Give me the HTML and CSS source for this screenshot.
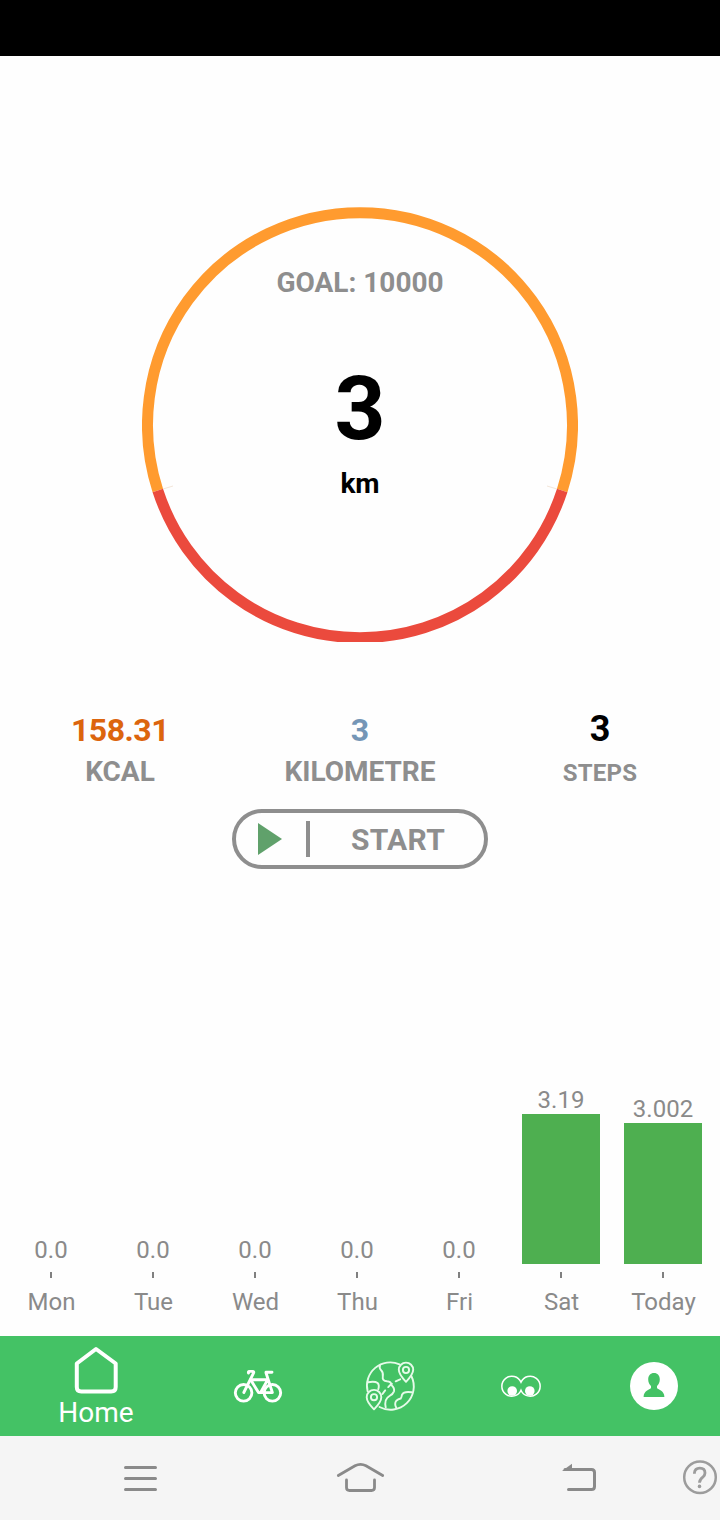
FILE: index.html
```html
<!DOCTYPE html>
<html lang="en">
<head>
<meta charset="utf-8">
<title>Activity</title>
<link rel="stylesheet" href="styles.css">
</head>
<body>
<div class="status-bar"></div>
<main class="home">
  <section class="dial">
    <svg class="dial-ring" viewBox="0 0 436 435" fill="none" stroke-width="11">
      <path stroke="#ff9b2f" d="M15.8 283.5A212.5 212.5 0 1 1 420.2 283.5"/>
      <path stroke="#eb4a3d" d="M15.8 283.5A212.5 212.5 0 0 0 420.2 283.5"/>
      <path stroke="#f3e6da" stroke-width="1" d="M21 282L31 279M415 282L405 279"/>
    </svg>
    <div class="dial-text">
      <p class="goal">GOAL: 10000</p>
      <p class="distance">3</p>
      <p class="unit">km</p>
    </div>
  </section>
  <section class="stats">
    <div class="stat kcal"><b>158.31</b><span>KCAL</span></div>
    <div class="stat kilometre"><b>3</b><span>KILOMETRE</span></div>
    <div class="stat steps"><b>3</b><span>STEPS</span></div>
  </section>
  <button class="start">
    <svg class="play" viewBox="0 0 24 32"><path fill="#60a16b" d="M0 0L24 16L0 32Z"/></svg>
    <i class="divider"></i>
    <span class="start-label">START</span>
  </button>
  <section class="chart">
    <div class="day"><span class="value">0.0</span><i class="bar" style="height:0"></i><i class="tick"></i><span class="name">Mon</span></div>
    <div class="day"><span class="value">0.0</span><i class="bar" style="height:0"></i><i class="tick"></i><span class="name">Tue</span></div>
    <div class="day"><span class="value">0.0</span><i class="bar" style="height:0"></i><i class="tick"></i><span class="name">Wed</span></div>
    <div class="day"><span class="value">0.0</span><i class="bar" style="height:0"></i><i class="tick"></i><span class="name">Thu</span></div>
    <div class="day"><span class="value">0.0</span><i class="bar" style="height:0"></i><i class="tick"></i><span class="name">Fri</span></div>
    <div class="day"><span class="value">3.19</span><i class="bar" style="height:150px"></i><i class="tick"></i><span class="name">Sat</span></div>
    <div class="day"><span class="value">3.002</span><i class="bar" style="height:141px"></i><i class="tick"></i><span class="name">Today</span></div>
  </section>
</main>
<nav class="tabs">
  <a class="tab tab-home">
    <svg width="48" height="50" viewBox="72 1345 48 50" fill="none" stroke="#fff" stroke-width="4" stroke-linejoin="round"><path d="M96 1349L115.7 1363.5V1387Q115.7 1391.5 111.2 1391.5H81.3Q76.8 1391.5 76.8 1387V1363.5Z"/></svg>
    <span>Home</span>
  </a>
  <a class="tab tab-bike">
    <svg width="50" height="36" viewBox="233 1368 50 36" fill="none" stroke="#fff" stroke-width="2.9" stroke-linecap="round" stroke-linejoin="round"><circle cx="243.6" cy="1392.8" r="8.3"/><circle cx="272.4" cy="1392.8" r="8.3"/><path d="M243.8 1392.5L253.5 1373.2Q254.3 1371.4 252.6 1371.4H249.3Q248 1371.4 248.5 1373"/><path d="M250.7 1379.8H267.7L260.5 1392.6H272.4L266 1372.8M266 1372.3H272M250.7 1379.8L258.5 1392.6H262"/></svg>
  </a>
  <a class="tab tab-map">
    <svg width="52" height="52" viewBox="364 1360 52 52" fill="none" stroke="#e6fbe9" stroke-width="1.9" stroke-linecap="round" stroke-linejoin="round"><path d="M399.5 1364.3A23.3 23.3 0 0 0 367.6 1391.2M411.3 1376A23.3 23.3 0 0 1 379.5 1407"/><path d="M406 1381.8Q398.8 1374.3 398.8 1369.8A7.2 7.2 0 0 1 413.2 1369.8Q413.2 1374.3 406 1381.8Z"/><circle cx="406" cy="1370" r="3.1"/><path d="M374 1409.3Q366.7 1402 366.7 1397.2A7.3 7.3 0 0 1 381.3 1397.2Q381.3 1402 374 1409.3Z"/><circle cx="374" cy="1397.2" r="3.1"/><path d="M380 1365.5Q378.8 1368 381.3 1370.5Q383.5 1372.5 382.8 1376.5Q382 1380.8 387 1381.3Q391.3 1381.5 391.3 1385Q394.8 1388 394 1391.3Q393 1394 389.5 1396Q384 1399 385.7 1407.5M368 1382.2Q375 1381 377.6 1383Q379.6 1385 378.3 1389.2M396.4 1408Q394 1403.8 396.3 1400.7Q398 1399.2 400.7 1398.5Q401.6 1397.5 402 1394.7Q404 1391 411.6 1392.3"/><path stroke-dasharray="5 4.5" d="M400.2 1379.3Q390 1383 382.5 1394"/></svg>
  </a>
  <a class="tab tab-eyes">
    <svg width="42" height="24" viewBox="500 1374 42 24" fill="none" stroke="#fff" stroke-width="1.5"><path d="M521 1382.2A10 10 0 1 0 521 1390.2A10 10 0 1 0 521 1382.2Z"/><circle cx="512.2" cy="1391" r="4.8" fill="#fff" stroke="none"/><circle cx="529.8" cy="1391" r="4.8" fill="#fff" stroke="none"/></svg>
  </a>
  <a class="tab tab-profile">
    <svg width="48" height="48" viewBox="0 0 48 48"><circle cx="24" cy="24" r="24" fill="#fff"/><path fill="#44c265" d="M24 11C20.5 11 18.2 13.6 18.2 17.5C18.2 20.5 19.4 22.5 21 24V26C19.5 28 13.6 28.5 13.6 35H34.4C34.4 28.5 28.5 28 27 26V24C28.6 22.5 29.8 20.5 29.8 17.5C29.8 13.6 27.5 11 24 11Z"/></svg>
  </a>
</nav>
<footer class="system-bar">
  <svg class="sys-menu" width="36" height="30" viewBox="122 1463 36 30" stroke="#8a8a8a" stroke-width="3" stroke-linecap="round"><path d="M125.5 1467.5H155.5M125.5 1478.5H155.5M125.5 1489.5H155.5"/></svg>
  <svg class="sys-home" width="50" height="34" viewBox="335 1461 50 34" fill="none" stroke="#8a8a8a" stroke-width="2.8" stroke-linecap="round"><path d="M338.3 1475.5L355 1465.7Q360.5 1463 366 1465.7L382.7 1475.5M346.5 1480V1487.5Q346.5 1490.5 349.5 1490.5H371.5Q374.5 1490.5 374.5 1487.5V1480"/></svg>
  <svg class="sys-back" width="36" height="30" viewBox="561 1463 36 30" fill="none" stroke="#8a8a8a" stroke-width="3" stroke-linecap="round"><path d="M565 1469.5H591.5Q594.5 1469.5 594.5 1472.5V1486.5Q594.5 1489.5 591.5 1489.5H568.5"/><path fill="#8a8a8a" stroke="none" d="M562 1471L572 1463.8V1471Z"/></svg>
  <svg class="sys-help" width="36" height="36" viewBox="682 1460 36 36" fill="none" stroke="#9c9c9c" stroke-width="2.5"><circle cx="700" cy="1477.3" r="15.8"/><path stroke-width="2.8" d="M694.4 1473.7V1473Q694.8 1468.2 699.8 1468.2Q705 1468.2 705 1473Q705 1475.3 702.8 1477.2Q699.5 1479.7 699.5 1482.8"/><circle cx="699.5" cy="1486.4" r="1.8" fill="#9c9c9c" stroke="none"/></svg>
</footer>
</body>
</html>
```
FILE: styles.css
```css
* { box-sizing: border-box; }
body {
  margin: 0;
  width: 720px;
  height: 1520px;
  display: flex;
  flex-direction: column;
  background: #fefefe;
  font-family: Roboto, "Liberation Sans", sans-serif;
  color: #8e8e8e;
}
p { margin: 0; }
svg { display: block; flex: none; }
.status-bar { height: 56px; background: #000; }
.home {
  height: 1280px;
  padding-top: 151px;
  display: flex;
  flex-direction: column;
  align-items: center;
}
.dial { display: grid; width: 436px; height: 435px; }
.dial-ring { grid-area: 1 / 1; width: 436px; height: 435px; }
.dial-text {
  grid-area: 1 / 1;
  padding-top: 60px;
  text-align: center;
  font-weight: 700;
}
.goal { font-size: 28px; line-height: 32px; }
.distance { margin-top: 60px; font-size: 89px; line-height: 100px; color: #000; }
.unit { margin-top: 9px; font-size: 28px; line-height: 32px; color: #000; }
.stats {
  margin-top: 66px;
  width: 720px;
  display: grid;
  grid-template-columns: repeat(3, 1fr);
}
.stat { display: flex; flex-direction: column; align-items: center; font-weight: 700; }
.stat b { font-size: 32px; line-height: 44px; font-weight: 700; }
.stat span { font-size: 28px; line-height: 40px; }
.kcal b { color: #dc650d; letter-spacing: -0.5px; }
.kilometre b { color: #7596b6; }
.stat.steps b { font-size: 36px; line-height: 42px; color: #000; }
.stat.steps span { font-size: 24px; line-height: 46px; letter-spacing: 0.2px; }
.start {
  margin-top: 13px;
  width: 256px;
  height: 60px;
  padding: 0 0 0 22px;
  display: flex;
  align-items: center;
  border: 4px solid #8e8e8e;
  border-radius: 30px;
  background: transparent;
  color: #8e8e8e;
  font: 700 30px/36px Roboto, "Liberation Sans", sans-serif;
}
.play { width: 24px; height: 32px; }
.divider { margin-left: 24px; width: 4px; height: 36px; background: #8e8e8e; }
.start-label { margin-left: 41px; padding-top: 2px; letter-spacing: 0.3px; }
.chart {
  margin-top: auto;
  width: 720px;
  height: 262px;
  display: grid;
  grid-template-columns: repeat(7, 102px);
  font-size: 24px;
  color: #8a8a8a;
}
.day {
  height: 242px;
  display: flex;
  flex-direction: column;
  align-items: center;
  justify-content: flex-end;
}
.value { line-height: 28px; }
.bar { width: 78px; background: #4eaf50; }
.tick { margin-top: 8px; width: 2px; height: 6px; background: #808080; }
.name { margin-top: 10px; line-height: 28px; padding-left: 1px; }
.tabs {
  height: 100px;
  display: flex;
  align-items: center;
  background: #44c265;
  color: #fff;
}
.tab { display: flex; flex-direction: column; align-items: center; }
.tab-home { width: 192px; padding-top: 2px; font-size: 28px; line-height: 32px; }
.tab-home span { margin-top: 2px; }
.tab-bike { margin-left: 41px; }
.tab-map { margin-left: 81px; }
.tab-eyes { margin-left: 84px; }
.tab-profile { margin-left: 88px; }
.system-bar {
  height: 84px;
  display: flex;
  align-items: center;
  background: #f5f5f5;
}
.sys-menu { margin-left: 122px; }
.sys-home { margin-left: 177px; }
.sys-back { margin-left: 176px; }
.sys-help { margin-left: 85px; }
```
